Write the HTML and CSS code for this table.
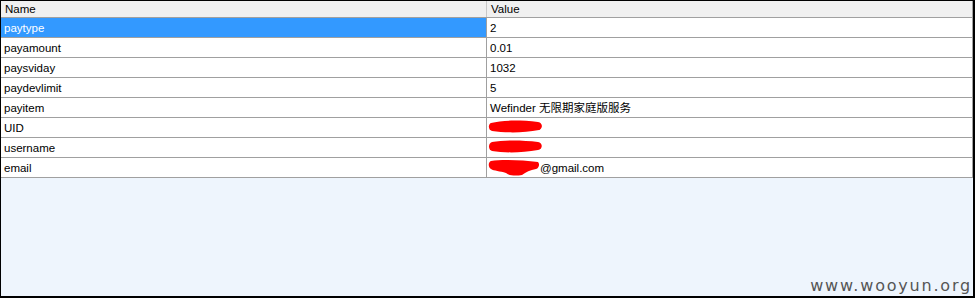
FILE: index.html
```html
<!DOCTYPE html>
<html lang="en">
    <head>
        <meta charset="UTF-8" />
        <title>Pay Params</title>
        <link rel="stylesheet" href="styles.css">
    </head>
    <body>
        <div class="frame">
            <table class="grid">
                <thead>
                    <tr>
                        <th class="col-name">Name</th>
                        <th>Value</th>
                    </tr>
                </thead>
                <tbody>
                    <tr class="selected">
                        <td class="col-name">paytype</td>
                        <td>2</td>
                    </tr>
                    <tr>
                        <td class="col-name">payamount</td>
                        <td>0.01</td>
                    </tr>
                    <tr>
                        <td class="col-name">paysviday</td>
                        <td>1032</td>
                    </tr>
                    <tr>
                        <td class="col-name">paydevlimit</td>
                        <td>5</td>
                    </tr>
                    <tr>
                        <td class="col-name">payitem</td>
                        <td>Wefinder 无限期家庭版服务</td>
                    </tr>
                    <tr>
                        <td class="col-name">UID</td>
                        <td>
                            <svg class="mask" width="56" height="18" viewBox="0 0 56 18">
                                <path d="M3 5 C14 2 32 2 50 4 C55 5 55 10 51 12 C36 15 18 15 4 13 C0 12 0 6 3 5 Z" fill="#f00" />
                            </svg>
                        </td>
                    </tr>
                    <tr>
                        <td class="col-name">username</td>
                        <td>
                            <svg class="mask" width="56" height="18" viewBox="0 0 56 18">
                                <path d="M4 4 C16 2 34 2 50 4 C55 5 55 11 50 12 C34 15 16 15 4 13 C0 12 0 5 4 4 Z" fill="#f00" />
                            </svg>
                        </td>
                    </tr>
                    <tr>
                        <td class="col-name">email</td>
                        <td>
                            <svg class="mask" width="52" height="18" viewBox="0 0 52 18">
                                <path d="M3 3 C14 1 34 2 50 4 C52 6 51 10 48 11 C42 12 38 14 34 17 C28 18 22 18 18 15 C12 13 6 13 3 11 C0 9 0 4 3 3 Z" fill="#f00" />
                            </svg>@gmail.com
                        </td>
                    </tr>
                </tbody>
            </table>
            <div class="watermark">www.wooyun.org</div>
        </div>
    </body>
</html>
```

FILE: styles.css
```css
body {
    margin: 0;
    font-family: "Liberation Sans", Arial, "Noto Sans CJK SC", sans-serif;
    font-size: 11.5px;
    color: #000;
}

.frame {
    position: relative;
    box-sizing: border-box;
    width: 975px;
    height: 298px;
    border: 1px solid #000;
    border-right-width: 2px;
    border-bottom-width: 2px;
    background-color: #eef5fd;
}

.grid {
    width: 972px;
    border-collapse: collapse;
    table-layout: fixed;
    background: #fff;
    border-right: 1px solid #a0a0a0;
}

.grid th {
    height: 15px;
    padding: 1px 0 0 4px;
    text-align: left;
    font-weight: normal;
    background-color: #f0f0f0;
    border-bottom: 1px solid #a0a0a0;
    line-height: 15px;
}

.grid td {
    height: 18px;
    padding: 1px 0 0 3px;
    border-bottom: 1px solid #a0a0a0;
    line-height: 18px;
    white-space: nowrap;
}

.grid .col-name {
    width: 481px;
    border-right: 1px solid #a0a0a0;
}

.grid th.col-name {
    border-right: 1px solid #c8c8c8;
}

.selected .col-name {
    background-color: #3399ff;
    color: #fff;
}

.mask {
    vertical-align: middle;
    margin-left: -2px;
    margin-top: -3px;
}

.watermark {
    position: absolute;
    right: 1px;
    bottom: 1px;
    font-family: "DejaVu Sans", Verdana, sans-serif;
    font-size: 16px;
    letter-spacing: 1.8px;
    color: #555;
}
```
